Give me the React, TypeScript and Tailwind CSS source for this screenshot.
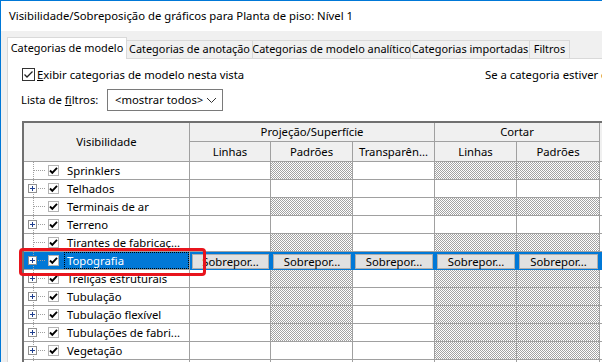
import React from 'react';

type Row = { name: string; plus: boolean; hatch: number[]; selected?: boolean };

const rows: Row[] = [
  { name: 'Sprinklers', plus: false, hatch: [0, 1, 0, 1, 1] },
  { name: 'Telhados', plus: true, hatch: [0, 0, 0, 0, 0] },
  { name: 'Terminais de ar', plus: false, hatch: [0, 1, 0, 1, 1] },
  { name: 'Terreno', plus: true, hatch: [0, 0, 0, 0, 0] },
  { name: 'Tirantes de fabricaç...', plus: false, hatch: [0, 1, 0, 1, 1] },
  { name: 'Topografia', plus: true, hatch: [0, 0, 0, 0, 0], selected: true },
  { name: 'Treliças estruturais', plus: true, hatch: [0, 1, 0, 1, 1] },
  { name: 'Tubulação', plus: true, hatch: [0, 1, 0, 1, 1] },
  { name: 'Tubulação flexível', plus: true, hatch: [0, 1, 0, 1, 1] },
  { name: 'Tubulações de fabri...', plus: true, hatch: [0, 1, 0, 1, 1] },
  { name: 'Vegetação', plus: true, hatch: [0, 0, 0, 1, 1] },
  { name: '', plus: true, hatch: [0, 0, 0, 0, 0] },
];

const COLS = 'grid grid-cols-[166px_81px_82px_82px_82px_83px_40px]';
const HATCH = 'bg-[image:repeating-conic-gradient(#a3a3a3_0_25%,#ffffff_0_50%)] bg-[length:2px_2px]';

function SmallCheck() {
  return (
    <div className="ml-[3px] w-[11px] h-[11px] shrink-0 border border-[#b4b4b4] bg-white flex items-center justify-center">
      <svg width="9" height="9" viewBox="0 0 9 9">
        <path d="M1 4.5 L3.3 6.8 L8 1.8" fill="none" stroke="#000" strokeWidth="1.9" />
      </svg>
    </div>
  );
}

function TreeCell({ row }: { row: Row }) {
  return (
    <div
      className={`relative flex items-center h-[18px] border-r border-b border-[#a0a0a0] ${
        row.selected ? 'bg-[#0078d7] text-white' : ''
      }`}
    >
      <div className="ml-[9px] self-stretch border-l border-dotted border-[#a0a0a0]" />
      <div className="w-[11px] border-t border-dotted border-[#a0a0a0]" />
      <SmallCheck />
      <div
        className={`ml-[5px] pl-[3px] flex-1 self-stretch flex items-center whitespace-nowrap ${
          row.selected ? 'outline outline-1 outline-dotted outline-black -outline-offset-1' : ''
        }`}
      >
        {row.name}
      </div>
      {row.plus && (
        <div className="absolute left-[4px] top-[4px] w-[9px] h-[9px] border border-[#919191] bg-white flex items-center justify-center">
          <svg width="7" height="7" viewBox="0 0 7 7">
            <path d="M1 3.5 H6 M3.5 1 V6" stroke="#1f3f8f" strokeWidth="1" />
          </svg>
        </div>
      )}
    </div>
  );
}

function BodyRow({ row }: { row: Row }) {
  if (row.selected) {
    return (
      <div className={COLS}>
        <TreeCell row={row} />
        {[0, 1, 2, 3, 4].map((i) => (
          <div key={i} className="h-[18px] bg-[#0078d7] pt-[2px] pb-[1px] pl-[2px] pr-[1px] border-r border-[#0078d7]">
            <div className="h-full bg-[#e1e1e1] border border-[#adadad] flex items-center justify-center text-black">
              Sobrepor...
            </div>
          </div>
        ))}
        <div className="h-[18px] bg-[#0078d7]" />
      </div>
    );
  }
  return (
    <div className={COLS}>
      <TreeCell row={row} />
      {row.hatch.map((h, i) => (
        <div key={i} className={`h-[18px] border-r border-b border-[#a0a0a0] ${h ? HATCH : 'bg-white'}`} />
      ))}
      <div className="h-[18px] border-r border-b border-[#a0a0a0]" />
    </div>
  );
}

export default function App() {
  return (
    <div className="relative w-[602px] h-[362px] overflow-hidden bg-white border-t border-l border-[#0078d7] text-[11.3px] text-black font-['Noto_Sans',sans-serif] leading-none">
      <div className="h-[30px] flex items-center pl-[8px] whitespace-nowrap text-[11.3px]">
        Visibilidade/Sobreposição de gráficos para Planta de piso: Nível 1
      </div>

      <div className="h-full bg-[#f0f0f0] pl-[6px] pt-[6px]">
        <div className="flex items-end h-[21px] whitespace-nowrap text-[10.9px]">
          <div className="relative z-10 w-[120px] h-[22px] -mb-[1px] bg-white border-l border-t border-r border-[#d9d9d9] flex items-center justify-center pb-[1px]">
            Categorias de modelo
          </div>
          <div className="w-[126px] h-[18px] border-t border-r border-[#d9d9d9] flex items-center justify-center">
            Categorias de anotação
          </div>
          <div className="w-[158px] h-[18px] border-t border-r border-[#d9d9d9] flex items-center justify-center">
            Categorias de modelo analítico
          </div>
          <div className="w-[119px] h-[18px] border-t border-r border-[#d9d9d9] flex items-center justify-center">
            Categorias importadas
          </div>
          <div className="w-[40px] h-[18px] border-t border-r border-[#d9d9d9] flex items-center justify-center">
            Filtros
          </div>
        </div>

        <div className="h-full bg-white border-l border-t border-[#d9d9d9] pl-[14px]">
          <div className="mt-[9px] h-[13px] flex items-center whitespace-nowrap">
            <div className="w-[463px] shrink-0 flex items-center">
              <div className="w-[13px] h-[13px] border border-[#333] flex items-center justify-center">
                <svg width="11" height="11" viewBox="0 0 11 11">
                  <path d="M1.5 5.5 L4 8 L9.5 2.5" fill="none" stroke="#222" strokeWidth="1.3" />
                </svg>
              </div>
              <span className="ml-[2px]">
                <span className="underline">E</span>xibir categorias de modelo nesta vista
              </span>
            </div>
            <span className="shrink-0">Se a categoria estiver de</span>
          </div>

          <div className="mt-[8px] flex items-center whitespace-nowrap">
            <div className="w-[86px] -ml-[1px]">
              Lista de <span className="underline">f</span>iltros:
            </div>
            <div className="w-[116px] h-[22px] border border-[#7a7a7a] flex items-center pl-[7px] pr-[5px]">
              <span className="flex-1">&lt;mostrar todos&gt;</span>
              <svg width="11" height="7" viewBox="0 0 11 7">
                <path d="M1 1 L5.5 5.5 L10 1" fill="none" stroke="#333" strokeWidth="1" />
              </svg>
            </div>
          </div>

          <div className="mt-[10px] border-t-2 border-l-2 border-[#707070]">
            <div className={`${COLS} grid-rows-[19px_20px] bg-[#f0f0f0]`}>
              <div className="row-span-2 border-r border-b border-[#a0a0a0] flex items-center justify-center">
                Visibilidade
              </div>
              <div className="col-span-3 border-r border-b border-[#a0a0a0] flex items-center justify-center">
                Projeção/Superfície
              </div>
              <div className="col-span-2 border-r border-b border-[#a0a0a0] flex items-center justify-center">
                Cortar
              </div>
              <div className="row-span-2 border-r border-b border-[#a0a0a0]" />
              <div className="border-r border-b border-[#a0a0a0] flex items-center justify-center">Linhas</div>
              <div className="border-r border-b border-[#a0a0a0] flex items-center justify-center">Padrões</div>
              <div className="border-r border-b border-[#a0a0a0] flex items-center justify-center whitespace-nowrap">
                Transparên...
              </div>
              <div className="border-r border-b border-[#a0a0a0] flex items-center justify-center">Linhas</div>
              <div className="border-r border-b border-[#a0a0a0] flex items-center justify-center">Padrões</div>
            </div>
            {rows.map((r, i) => (
              <BodyRow key={i} row={r} />
            ))}
          </div>
        </div>
      </div>

      <div className="absolute left-[18px] top-[247px] w-[187px] h-[28px] border-[3px] border-[#e8141c] rounded-[4px]" />
    </div>
  );
}
